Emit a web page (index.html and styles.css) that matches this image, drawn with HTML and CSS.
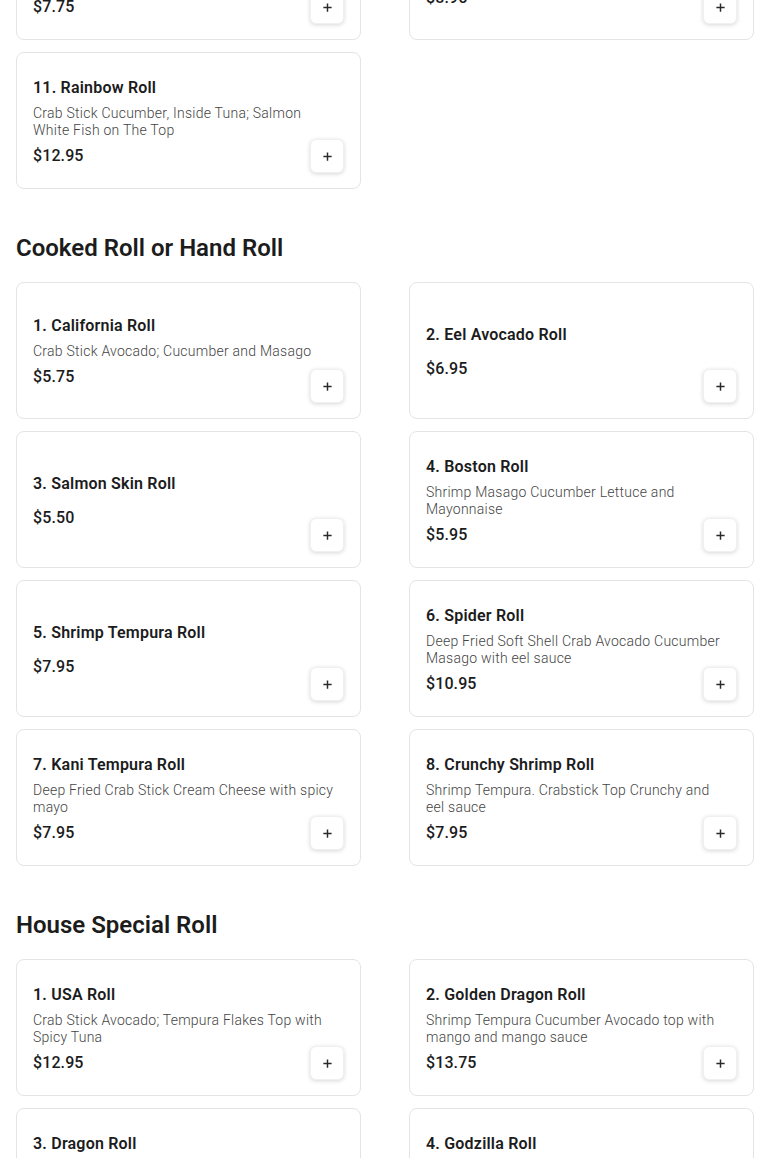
FILE: index.html
```html
<!DOCTYPE html>
<html lang="en">
<head>
<meta charset="utf-8">
<title>Menu</title>
<link rel="stylesheet" href="styles.css">
</head>
<body>
<main class="menu">
  <section class="section section-first">
    <div class="grid">
      <div class="card">
        <div class="info">
          <div class="name">9. Spicy Salmon Roll</div>
          <div class="desc">Spicy Salmon Cucumber and Avocado with Tempura Flakes</div>
          <div class="price">$7.75</div>
        </div>
        <button class="add" aria-label="Add"><svg viewBox="0 0 12 12"><path d="M6 1.5v9M1.5 6h9"/></svg></button>
      </div>
      <div class="card">
        <div class="info">
          <div class="name">10. Philadelphia Roll</div>
          <div class="desc">Smoked Salmon Cream Cheese and Avocado</div>
          <div class="price">$8.95</div>
        </div>
        <button class="add" aria-label="Add"><svg viewBox="0 0 12 12"><path d="M6 1.5v9M1.5 6h9"/></svg></button>
      </div>
      <div class="card">
        <div class="info">
          <div class="name">11. Rainbow Roll</div>
          <div class="desc">Crab Stick Cucumber, Inside Tuna; Salmon White Fish on The Top</div>
          <div class="price">$12.95</div>
        </div>
        <button class="add" aria-label="Add"><svg viewBox="0 0 12 12"><path d="M6 1.5v9M1.5 6h9"/></svg></button>
      </div>
    </div>
  </section>

  <section class="section">
    <h2 class="title">Cooked Roll or Hand Roll</h2>
    <div class="grid">
      <div class="card">
        <div class="info">
          <div class="name">1. California Roll</div>
          <div class="desc">Crab Stick Avocado; Cucumber and Masago</div>
          <div class="price">$5.75</div>
        </div>
        <button class="add" aria-label="Add"><svg viewBox="0 0 12 12"><path d="M6 1.5v9M1.5 6h9"/></svg></button>
      </div>
      <div class="card">
        <div class="info">
          <div class="name">2. Eel Avocado Roll</div>
          <div class="price">$6.95</div>
        </div>
        <button class="add" aria-label="Add"><svg viewBox="0 0 12 12"><path d="M6 1.5v9M1.5 6h9"/></svg></button>
      </div>
      <div class="card">
        <div class="info">
          <div class="name">3. Salmon Skin Roll</div>
          <div class="price">$5.50</div>
        </div>
        <button class="add" aria-label="Add"><svg viewBox="0 0 12 12"><path d="M6 1.5v9M1.5 6h9"/></svg></button>
      </div>
      <div class="card">
        <div class="info">
          <div class="name">4. Boston Roll</div>
          <div class="desc">Shrimp Masago Cucumber Lettuce and Mayonnaise</div>
          <div class="price">$5.95</div>
        </div>
        <button class="add" aria-label="Add"><svg viewBox="0 0 12 12"><path d="M6 1.5v9M1.5 6h9"/></svg></button>
      </div>
      <div class="card">
        <div class="info">
          <div class="name">5. Shrimp Tempura Roll</div>
          <div class="price">$7.95</div>
        </div>
        <button class="add" aria-label="Add"><svg viewBox="0 0 12 12"><path d="M6 1.5v9M1.5 6h9"/></svg></button>
      </div>
      <div class="card">
        <div class="info">
          <div class="name">6. Spider Roll</div>
          <div class="desc">Deep Fried Soft Shell Crab Avocado Cucumber Masago with eel sauce</div>
          <div class="price">$10.95</div>
        </div>
        <button class="add" aria-label="Add"><svg viewBox="0 0 12 12"><path d="M6 1.5v9M1.5 6h9"/></svg></button>
      </div>
      <div class="card">
        <div class="info">
          <div class="name">7. Kani Tempura Roll</div>
          <div class="desc">Deep Fried Crab Stick Cream Cheese with spicy mayo</div>
          <div class="price">$7.95</div>
        </div>
        <button class="add" aria-label="Add"><svg viewBox="0 0 12 12"><path d="M6 1.5v9M1.5 6h9"/></svg></button>
      </div>
      <div class="card">
        <div class="info">
          <div class="name">8. Crunchy Shrimp Roll</div>
          <div class="desc">Shrimp Tempura. Crabstick Top Crunchy and eel sauce</div>
          <div class="price">$7.95</div>
        </div>
        <button class="add" aria-label="Add"><svg viewBox="0 0 12 12"><path d="M6 1.5v9M1.5 6h9"/></svg></button>
      </div>
    </div>
  </section>

  <section class="section">
    <h2 class="title">House Special Roll</h2>
    <div class="grid">
      <div class="card">
        <div class="info">
          <div class="name">1. USA Roll</div>
          <div class="desc">Crab Stick Avocado; Tempura Flakes Top with Spicy Tuna</div>
          <div class="price">$12.95</div>
        </div>
        <button class="add" aria-label="Add"><svg viewBox="0 0 12 12"><path d="M6 1.5v9M1.5 6h9"/></svg></button>
      </div>
      <div class="card">
        <div class="info">
          <div class="name">2. Golden Dragon Roll</div>
          <div class="desc">Shrimp Tempura Cucumber Avocado top with mango and mango sauce</div>
          <div class="price">$13.75</div>
        </div>
        <button class="add" aria-label="Add"><svg viewBox="0 0 12 12"><path d="M6 1.5v9M1.5 6h9"/></svg></button>
      </div>
      <div class="card">
        <div class="info">
          <div class="name">3. Dragon Roll</div>
          <div class="desc">Shrimp Tempura Cucumber Inside with Eel and Avocado on Top</div>
          <div class="price">$13.95</div>
        </div>
        <button class="add" aria-label="Add"><svg viewBox="0 0 12 12"><path d="M6 1.5v9M1.5 6h9"/></svg></button>
      </div>
      <div class="card">
        <div class="info">
          <div class="name">4. Godzilla Roll</div>
          <div class="desc">Deep Fried Spicy Tuna Crab Stick Avocado with Spicy Mayo and eel sauce</div>
          <div class="price">$13.95</div>
        </div>
        <button class="add" aria-label="Add"><svg viewBox="0 0 12 12"><path d="M6 1.5v9M1.5 6h9"/></svg></button>
      </div>
    </div>
  </section>
</main>
</body>
</html>
```

FILE: styles.css
```css
* { box-sizing: border-box; }

html, body {
  margin: 0;
  padding: 0;
  background: #ffffff;
}

body {
  font-family: Roboto, "Noto Sans", "Liberation Sans", sans-serif;
  color: #1c1c1c;
  overflow: hidden;
}

.menu {
  padding: 0 16px 40px;
}

.section-first {
  margin-top: -97px;
}

.section + .section {
  margin-top: 41px;
}

.title {
  margin: 0 0 16px;
  font-size: 24px;
  line-height: 36px;
  font-weight: 600;
  color: #1c1c1c;
}

.grid {
  display: grid;
  grid-template-columns: 345px 345px;
  column-gap: 48px;
  row-gap: 12px;
}

.card {
  display: grid;
  grid-template-columns: 1fr;
  grid-template-rows: 1fr;
  min-height: 137px;
  padding: 16px 16px 15px;
  border: 1px solid #e4e4e4;
  border-radius: 8px;
  background: #fff;
}

.info {
  grid-area: 1 / 1;
  align-self: center;
  display: flex;
  flex-direction: column;
  max-width: 302px;
  padding-top: 1px;
}

.name {
  font-size: 16px;
  line-height: 24px;
  font-weight: 600;
  letter-spacing: 0.2px;
  color: #1c1c1c;
  margin-bottom: 5px;
}

.desc {
  font-size: 14px;
  line-height: 17px;
  font-weight: 300;
  letter-spacing: 0.25px;
  color: #444444;
}

.price {
  margin-top: 5px;
  font-size: 16px;
  line-height: 24px;
  font-weight: 500;
  letter-spacing: 0.1px;
  color: #1c1c1c;
}

.add {
  grid-area: 1 / 1;
  align-self: end;
  justify-self: end;
  width: 34px;
  height: 34px;
  padding: 0;
  border: 1px solid #f0f0f0;
  border-radius: 6px;
  background: #fff;
  box-shadow: 0 1px 4px rgba(0, 0, 0, 0.16);
  display: flex;
  align-items: center;
  justify-content: center;
  cursor: pointer;
}

.add svg {
  width: 11px;
  height: 11px;
  stroke: #2a2a2a;
  stroke-width: 1.6;
  fill: none;
}
```
